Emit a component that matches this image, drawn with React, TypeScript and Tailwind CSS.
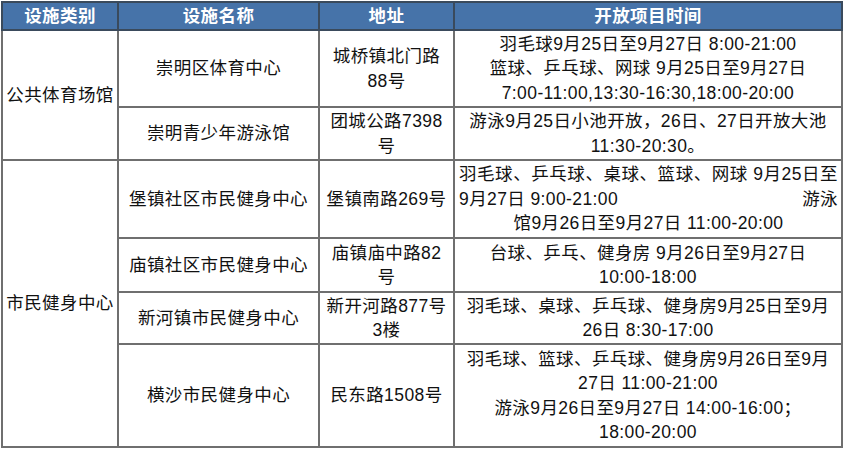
import React from "react";

const font = { fontFamily: '"Liberation Sans", "Noto Sans CJK SC", sans-serif' };

function Lines({ lines }: { lines: React.ReactNode[] }) {
  return (
    <div className="flex flex-col items-center">
      {lines.map((l, i) => (
        <div key={i} className="whitespace-nowrap leading-[24.5px]">
          {l}
        </div>
      ))}
    </div>
  );
}

export default function App() {
  const td = "border-2 border-[#6f6f6f] p-0 text-center align-middle";
  const th = "border-2 border-[#3a4a5c] p-0 text-center align-middle";
  return (
    <div className="w-[844px] h-[450px] bg-white pt-[1px] pl-[1px] overflow-hidden" style={font}>
      <table className="table-fixed border-collapse text-[17.5px] tracking-[0.4px] text-[#111]">
        <colgroup>
          <col style={{ width: 116 }} />
          <col style={{ width: 201 }} />
          <col style={{ width: 135 }} />
          <col style={{ width: 388 }} />
        </colgroup>
        <thead>
          <tr className="h-[28px] bg-[#4673a9] text-white font-bold leading-[22px]">
            <th className={th}>设施类别</th>
            <th className={th}>设施名称</th>
            <th className={th}>地址</th>
            <th className={th}>开放项目时间</th>
          </tr>
        </thead>
        <tbody>
          <tr className="h-[77px]">
            <td rowSpan={2} className={td}>公共体育场馆</td>
            <td className={td}>崇明区体育中心</td>
            <td className={td}>
              <Lines lines={["城桥镇北门路", "88号"]} />
            </td>
            <td className={td}>
              <Lines
                lines={[
                  "羽毛球9月25日至9月27日 8:00-21:00",
                  "篮球、乒乓球、网球  9月25日至9月27日",
                  "7:00-11:00,13:30-16:30,18:00-20:00",
                ]}
              />
            </td>
          </tr>
          <tr className="h-[53px]">
            <td className={td}>崇明青少年游泳馆</td>
            <td className={td}>
              <Lines lines={["团城公路7398", "号"]} />
            </td>
            <td className={td}>
              <Lines
                lines={["游泳9月25日小池开放，26日、27日开放大池", "11:30-20:30。"]}
              />
            </td>
          </tr>
          <tr className="h-[78px]">
            <td rowSpan={4} className={td}>市民健身中心</td>
            <td className={td}>堡镇社区市民健身中心</td>
            <td className={td}>堡镇南路269号</td>
            <td className={td}>
              <div className="flex flex-col pl-[4px] pr-[3px]">
                <div className="whitespace-nowrap leading-[24.5px] text-justify [text-align-last:justify]">
                  羽毛球、乒乓球、桌球、篮球、网球 9月25日至
                </div>
                <div className="whitespace-nowrap leading-[24.5px] flex justify-between">
                  <span>9月27日 9:00-21:00</span>
                  <span>游泳</span>
                </div>
                <div className="whitespace-nowrap leading-[24.5px] text-center">
                  馆9月26日至9月27日 11:00-20:00
                </div>
              </div>
            </td>
          </tr>
          <tr className="h-[54px]">
            <td className={td}>庙镇社区市民健身中心</td>
            <td className={td}>
              <Lines lines={["庙镇庙中路82", "号"]} />
            </td>
            <td className={td}>
              <Lines lines={["台球、乒乓、健身房 9月26日至9月27日", "10:00-18:00"]} />
            </td>
          </tr>
          <tr className="h-[52px]">
            <td className={td}>新河镇市民健身中心</td>
            <td className={td}>
              <Lines lines={["新开河路877号", "3楼"]} />
            </td>
            <td className={td}>
              <Lines
                lines={["羽毛球、桌球、乒乓球、健身房9月25日至9月", "26日 8:30-17:00"]}
              />
            </td>
          </tr>
          <tr className="h-[103px]">
            <td className={td}>横沙市民健身中心</td>
            <td className={td}>民东路1508号</td>
            <td className={td}>
              <Lines
                lines={[
                  "羽毛球、篮球、乒乓球、健身房9月26日至9月",
                  "27日 11:00-21:00",
                  "游泳9月26日至9月27日 14:00-16:00；",
                  "18:00-20:00",
                ]}
              />
            </td>
          </tr>
        </tbody>
      </table>
    </div>
  );
}
